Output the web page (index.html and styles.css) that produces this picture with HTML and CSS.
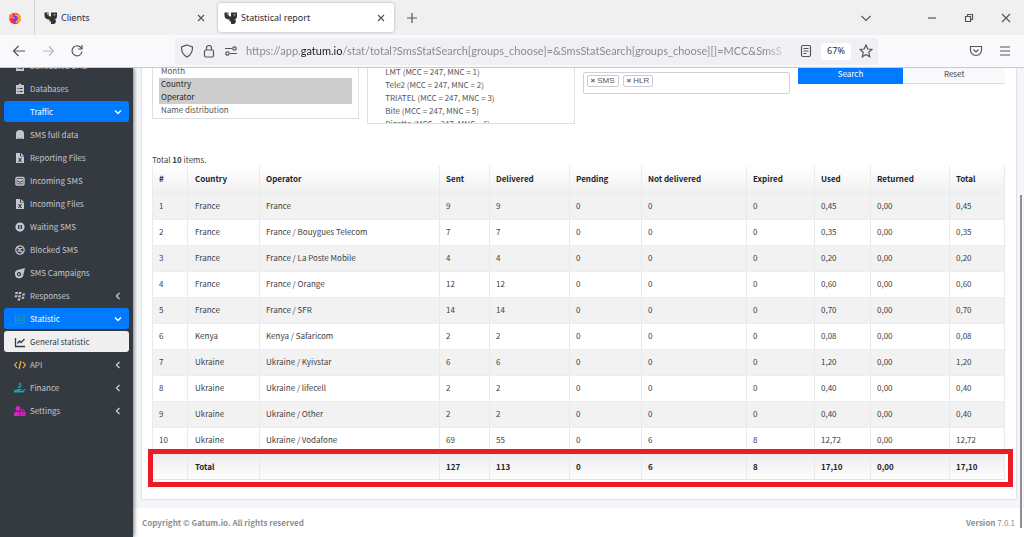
FILE: index.html
```html
<!DOCTYPE html>
<html lang="en">
<head>
<meta charset="utf-8">
<title>Statistical report</title>
<link rel="stylesheet" href="styles.css">
</head>
<body>
<svg class="defs" aria-hidden="true">
  <symbol id="gatum" viewBox="0 0 14 14"><path fill="#333" d="M.5 1.500H4.500V4Q4.500 5.500 7 5.500V1.500H13V5Q13 8.500 9.500 8.500H4.500Q.5 8 .5 4.500z"/><path fill="#333" d="M5.500 8h5l1.500 1.500Q12 12.500 10 13H7V10.500H5.500z"/><path fill="#999" d="M3 1.500h1.500V4H3zM9.500 3H11.500v1.500h-2z"/></symbol>
  <symbol id="x" viewBox="0 0 10 10"><path d="M2 2l6 6M8 2l-6 6"/></symbol>
  <symbol id="left" viewBox="0 0 10 10"><path d="M6.500 2L3.500 5l3 3"/></symbol>
  <symbol id="down" viewBox="0 0 10 10"><path d="M2 3.500l3 3 3-3"/></symbol>
  <symbol id="board" viewBox="0 0 12 12"><path fill="currentColor" fill-rule="evenodd" d="M2 2h2.500a1.500 1.500 0 0 1 3 0H10v9H2zM3.500 5v1h1V5zm2 0v1h3V5zm-2 3v1h1V8zm2 0v1h3V8z"/></symbol>
  <symbol id="sim" viewBox="0 0 12 12"><path fill="currentColor" d="M2 4.500a4 3.500 0 0 1 8 0V10H8.500l-1-.8-1.500.8-1.500-.8-1 .8H2z"/></symbol>
  <symbol id="file" viewBox="0 0 12 12"><path fill="currentColor" fill-rule="evenodd" d="M2 1h4v3.500h4V11H2zM7 1l3 3H7zM4 6l1.300 2L4 10h1.200L6 8.800 6.800 10H8L6.700 8 8 6H6.800L6 7.200 5.200 6z"/></symbol>
  <symbol id="mail" viewBox="0 0 12 12"><rect x="2" y="2.500" width="8" height="7.500" rx="1" fill="none" stroke="currentColor" stroke-width="1.400"/><path fill="currentColor" d="M3 4h6v1.200L6 6.800 3 5.200zM3 6.200l3 1.500 3-1.500V8.500H3z"/></symbol>
  <symbol id="pause" viewBox="0 0 12 12"><path fill="currentColor" fill-rule="evenodd" d="M6 1.500a4.600 4.600 0 1 0 0 9.200A4.600 4.600 0 0 0 6 1.500zM4 4h1.400v4H4zm2.600 0H8v4H6.600z"/></symbol>
  <symbol id="ban" viewBox="0 0 12 12"><g fill="none" stroke="currentColor" stroke-width="1.200"><circle cx="6" cy="6" r="4.200"/><path d="M3 3l6 6M5.500 4.500h3M3.500 7.200h3"/></g></symbol>
  <symbol id="comet" viewBox="0 0 12 12"><path fill="currentColor" fill-rule="evenodd" d="M11 1L9.500 7A4.300 4.300 0 1 1 3.500 3zM5 5a2.200 2.200 0 1 0 .1 0z"/><circle cx="5" cy="7.300" r="1" fill="currentColor"/></symbol>
  <symbol id="berry" viewBox="0 0 12 12"><path fill="currentColor" d="M1.500 2h2.500l-.5 2H1zM5 2h2.500L7 4H4.500zM1 5.200h2.500l-.5 2H.5zM4.500 5.200H7l-.5 2H4zM8.500 3.500H11l-.5 2H8zM8 6.700h2.500l-.5 2H7.500zM4 8.400h2.500l-.5 2H3.500z"/></symbol>
  <symbol id="bars" viewBox="0 0 12 12"><path fill="none" stroke="currentColor" stroke-width="1.200" d="M1.500 1.500v9H11M4 5v4M6 3v6M8 6v3M10 2v7"/></symbol>
  <symbol id="line" viewBox="0 0 12 12"><path fill="none" stroke="currentColor" stroke-width="1.300" d="M1.500 2v8.500H11M3.500 7.500L5.500 5 7 6.500l3.500-3.500"/></symbol>
  <symbol id="code" viewBox="0 0 12 12"><path fill="none" stroke="currentColor" stroke-width="1.200" d="M3 3L.7 6 3 9M9 3l2.300 3L9 9M7 2L5 10"/></symbol>
  <symbol id="hand" viewBox="0 0 12 12"><path fill="currentColor" d="M0 8h2l1.500-1h4v1H6v.7h2L10.500 7l1 .7L9 10.500H0z"/><path fill="none" stroke="currentColor" d="M7.500 2.200Q6.500 1 5.500 1.700T6.400 3.500 5.400 5.200 4.500 4.700M6 .5v5.500"/></symbol>
  <symbol id="user" viewBox="0 0 12 12"><circle cx="4" cy="3.500" r="2.500" fill="currentColor"/><path fill="currentColor" d="M0 11V9q0-2.300 2.300-2.300h3.200V11z"/><path fill="currentColor" fill-rule="evenodd" d="M6.200 7H7V6a1.800 1.800 0 0 1 3.600 0v1h.9v4H6.200zM8 7h1.700V6A.8.800 0 0 0 8 6zm.3 1.500v1h1v-1z"/></symbol>
</svg>

<header class="browser">
  <div class="tabs">
    <div class="pinned"><svg class="fox" viewBox="0 0 14 14"><circle cx="7" cy="7.500" r="5.800" fill="#f4364c"/><path d="M7 1l1.500 2.500L12 4q2 4-.5 7L8 12z" fill="#ffa436"/><path d="M1 3l1 1 2-2 1 3-3 3z" fill="#ff7a2a"/><circle cx="7" cy="7.500" r="2.800" fill="#7b3fe0"/><path d="M3 6q3-1 4 1l-2 1z" fill="#ff8a3a"/></svg></div>
    <div class="tab"><svg class="fav"><use href="#gatum"/></svg><span class="name">Clients</span><button class="plain" aria-label="Close Clients"><svg class="ico10"><use href="#x"/></svg></button></div>
    <div class="tab active"><svg class="fav"><use href="#gatum"/></svg><span class="name">Statistical report</span><button class="plain" aria-label="Close Statistical report"><svg class="ico10"><use href="#x"/></svg></button></div>
    <button class="plain new" aria-label="New tab"><svg class="ico12" viewBox="0 0 12 12"><path d="M6 1v10M1 6h10"/></svg></button>
    <div class="window">
      <button class="plain list" aria-label="List tabs"><svg class="ico12" viewBox="0 0 12 12"><path d="M1.500 4L6 8.500 10.500 4"/></svg></button>
      <button class="plain" aria-label="Minimize"><svg class="ico10" viewBox="0 0 10 10"><path d="M1 5h8"/></svg></button>
      <button class="plain" aria-label="Restore"><svg class="ico10" viewBox="0 0 10 10"><path d="M1.500 3.500h5v5h-5zM3.500 3.500v-2h5v5h-2"/></svg></button>
      <button class="plain" aria-label="Close"><svg class="ico10" viewBox="0 0 10 10"><path d="M1 1l8 8M9 1L1 9"/></svg></button>
    </div>
  </div>
  <div class="toolbar">
    <div class="nav">
      <button class="plain" aria-label="Back"><svg class="ico14" viewBox="0 0 14 14"><path d="M13 7H2M6.500 2L1.500 7l5 5"/></svg></button>
      <button class="plain dim" aria-label="Forward"><svg class="ico14" viewBox="0 0 14 14"><path d="M2 7h10M8 2.500L12.500 7 8 11.500"/></svg></button>
      <button class="plain" aria-label="Reload"><svg class="ico14" viewBox="0 0 14 14"><path d="M11.500 4.500A5 5 0 1 0 12 7.500M12 1v4H8"/></svg></button>
    </div>
    <div class="address">
      <svg class="ico14" viewBox="0 0 14 14"><path d="M7 1l5.500 2q.3 7-5.500 10Q1.200 10 1.500 3z"/></svg>
      <svg class="ico14" viewBox="0 0 14 14"><rect x="2.500" y="6" width="9" height="7" rx="1.500"/><path d="M4.500 6V4a2.500 2.500 0 0 1 5 0v2"/></svg>
      <svg class="ico14" viewBox="0 0 14 14"><path d="M1 4.500h7M6 9.500h7"/><circle cx="10.500" cy="4.500" r="1.700"/><circle cx="3.500" cy="9.500" r="1.700"/></svg>
      <div class="url">https://app.<b>gatum.io</b>/stat/total?SmsStatSearch[groups_choose]=&amp;SmsStatSearch[groups_choose][]=MCC&amp;SmsS</div>
      <svg class="ico14" viewBox="0 0 14 14"><rect x="2.500" y="1.500" width="9" height="11" rx="1.500"/><path d="M4.500 4.500h5M4.500 7h5M4.500 9.500h3"/></svg>
      <button class="zoom">67%</button>
      <svg class="ico14" viewBox="0 0 14 14"><path d="M7 1l1.800 4 4.200.4-3.200 2.900.9 4.400L7 10.500l-3.700 2.200.9-4.400L1 5.400 5.200 5z"/></svg>
    </div>
    <div class="tools">
      <button class="plain" aria-label="Pocket"><svg class="ico14" viewBox="0 0 14 14"><path d="M1.500 2.500h11V6a5.500 5.500 0 0 1-11 0zM4.500 5.500L7 8l2.500-2.500"/></svg></button>
      <button class="plain" aria-label="Menu"><svg class="ico12" viewBox="0 0 12 12"><path d="M1 2h10M1 6h10M1 10h10"/></svg></button>
    </div>
  </div>
</header>

<div class="app">
  <nav class="sidebar">
    <a href="#"><svg><use href="#board"/></svg><span>Scheduled SMS</span></a>
    <a href="#"><svg><use href="#board"/></svg><span>Databases</span></a>
    <a href="#" class="open"><svg></svg><span>Traffic</span><svg class="chev"><use href="#down"/></svg></a>
    <a href="#"><svg><use href="#sim"/></svg><span>SMS full data</span></a>
    <a href="#"><svg><use href="#file"/></svg><span>Reporting Files</span></a>
    <a href="#"><svg><use href="#mail"/></svg><span>Incoming SMS</span></a>
    <a href="#"><svg><use href="#file"/></svg><span>Incoming Files</span></a>
    <a href="#"><svg><use href="#pause"/></svg><span>Waiting SMS</span></a>
    <a href="#"><svg><use href="#ban"/></svg><span>Blocked SMS</span></a>
    <a href="#"><svg><use href="#comet"/></svg><span>SMS Campaigns</span></a>
    <a href="#"><svg><use href="#berry"/></svg><span>Responses</span><svg class="chev"><use href="#left"/></svg></a>
    <a href="#" class="open"><svg class="green"><use href="#bars"/></svg><span>Statistic</span><svg class="chev"><use href="#down"/></svg></a>
    <a href="#" class="current"><svg><use href="#line"/></svg><span>General statistic</span></a>
    <a href="#"><svg class="yellow"><use href="#code"/></svg><span>API</span><svg class="chev"><use href="#left"/></svg></a>
    <a href="#"><svg class="teal"><use href="#hand"/></svg><span>Finance</span><svg class="chev"><use href="#left"/></svg></a>
    <a href="#"><svg class="pink"><use href="#user"/></svg><span>Settings</span><svg class="chev"><use href="#left"/></svg></a>
  </nav>

  <div class="content">
    <main class="card">
      <form class="filters">
        <select multiple class="groups" aria-label="Group by">
          <option>Day</option><option>Month</option><option selected>Country</option><option selected>Operator</option><option>Name distribution</option>
        </select>
        <select multiple class="operators" aria-label="Operators">
          <optgroup label="Latvia"><option>LMT (MCC = 247, MNC = 1)</option><option>Tele2 (MCC = 247, MNC = 2)</option><option>TRIATEL (MCC = 247, MNC = 3)</option><option>Bite (MCC = 247, MNC = 5)</option><option>Rigatta (MCC = 247, MNC = 6)</option></optgroup>
        </select>
        <div class="tags"><button type="button"><i>×</i>SMS</button><button type="button"><i>×</i>HLR</button></div>
        <div class="actions"><button type="submit" class="search">Search</button><button type="reset" class="reset">Reset</button></div>
      </form>
      <p class="summary">Total <b>10</b> items.</p>
      <div class="report">
        <table>
          <colgroup><col class="c1"><col class="c2"><col class="c3"><col class="c4"><col class="c5"><col class="c6"><col class="c7"><col class="c8"><col class="c9"><col class="c10"><col class="c11"></colgroup>
          <thead><tr><th>#</th><th>Country</th><th>Operator</th><th>Sent</th><th>Delivered</th><th>Pending</th><th>Not delivered</th><th>Expired</th><th>Used</th><th>Returned</th><th>Total</th></tr></thead>
          <tbody>
            <tr><td>1</td><td>France</td><td>France</td><td>9</td><td>9</td><td>0</td><td>0</td><td>0</td><td>0,45</td><td>0,00</td><td>0,45</td></tr>
            <tr><td>2</td><td>France</td><td>France / Bouygues Telecom</td><td>7</td><td>7</td><td>0</td><td>0</td><td>0</td><td>0,35</td><td>0,00</td><td>0,35</td></tr>
            <tr><td>3</td><td>France</td><td>France / La Poste Mobile</td><td>4</td><td>4</td><td>0</td><td>0</td><td>0</td><td>0,20</td><td>0,00</td><td>0,20</td></tr>
            <tr><td>4</td><td>France</td><td>France / Orange</td><td>12</td><td>12</td><td>0</td><td>0</td><td>0</td><td>0,60</td><td>0,00</td><td>0,60</td></tr>
            <tr><td>5</td><td>France</td><td>France / SFR</td><td>14</td><td>14</td><td>0</td><td>0</td><td>0</td><td>0,70</td><td>0,00</td><td>0,70</td></tr>
            <tr><td>6</td><td>Kenya</td><td>Kenya / Safaricom</td><td>2</td><td>2</td><td>0</td><td>0</td><td>0</td><td>0,08</td><td>0,00</td><td>0,08</td></tr>
            <tr><td>7</td><td>Ukraine</td><td>Ukraine / Kyivstar</td><td>6</td><td>6</td><td>0</td><td>0</td><td>0</td><td>1,20</td><td>0,00</td><td>1,20</td></tr>
            <tr><td>8</td><td>Ukraine</td><td>Ukraine / lifecell</td><td>2</td><td>2</td><td>0</td><td>0</td><td>0</td><td>0,40</td><td>0,00</td><td>0,40</td></tr>
            <tr><td>9</td><td>Ukraine</td><td>Ukraine / Other</td><td>2</td><td>2</td><td>0</td><td>0</td><td>0</td><td>0,40</td><td>0,00</td><td>0,40</td></tr>
            <tr><td>10</td><td>Ukraine</td><td>Ukraine / Vodafone</td><td>69</td><td>55</td><td>0</td><td>6</td><td>8</td><td>12,72</td><td>0,00</td><td>12,72</td></tr>
          </tbody>
          <tfoot><tr><td></td><td>Total</td><td></td><td>127</td><td>113</td><td>0</td><td>6</td><td>8</td><td>17,10</td><td>0,00</td><td>17,10</td></tr></tfoot>
        </table>
        <div class="highlight"></div>
      </div>
    </main>
    <footer class="foot"><b>Copyright © Gatum.io. All rights reserved</b><span><b>Version</b> 7.0.1</span></footer>
    <div class="thumb"></div>
  </div>
</div>
</body>
</html>
```

FILE: styles.css
```css
* { box-sizing: border-box; }
body {
  margin: 0;
  height: 100vh;
  display: flex;
  flex-direction: column;
  overflow: hidden;
  font: 8px/12px "Noto Sans CJK SC", "Noto Sans", sans-serif;
  color: #3d4145;
  background: #fff;
}
button, select { font: inherit; color: inherit; }
svg { display: block; flex: none; }
.defs { position: absolute; width: 0; height: 0; }

/* Browser frame */
.browser { flex: none; font-family: "Noto Sans", sans-serif; font-size: 9px; color: #2c2c30; }
.browser svg { fill: none; stroke: #55555c; stroke-width: 1.2; }
.browser .fox, .browser .fav { stroke: none; }
.plain { border: 0; padding: 0; background: none; display: flex; }
.ico10 { width: 10px; height: 10px; }
.ico12 { width: 12px; height: 12px; }
.ico14 { width: 14px; height: 14px; }
.tabs { height: 35px; display: flex; align-items: center; background: #f0f0f0; }
.pinned { width: 35px; height: 35px; display: flex; align-items: center; padding-left: 8px; border-right: 1px solid #d4d4d8; }
.fox { width: 14px; height: 14px; }
.fav { width: 14px; height: 14px; }
.tab { width: 176px; height: 29px; margin-left: 3px; display: flex; align-items: center; gap: 3px; padding: 0 8px 0 6px; border-radius: 3px; }
.tab .name { flex: 1; white-space: nowrap; }
.tab.active { margin-left: 4px; background: #fff; box-shadow: 0 0 3px #aaa; }
.new { margin-left: 12px; }
.window { margin-left: auto; display: flex; align-items: center; gap: 27px; padding-right: 13px; }
.window .list { padding-right: 28px; }
.toolbar { height: 33px; display: flex; align-items: center; background: #f9f9fb; border-bottom: 1px solid #c9cacf; }
.nav { width: 175px; flex: none; display: flex; gap: 15px; padding-left: 12px; }
.dim { opacity: .4; }
.address { flex: 1; min-width: 0; height: 27px; display: flex; align-items: center; gap: 8px; padding: 0 5px; background: #f0f0f4; border-radius: 3px; }
.url { flex: 1; min-width: 0; overflow: hidden; white-space: nowrap; font: 11px/16px Lato, "Noto Sans", sans-serif; color: #8a8a92; -webkit-mask-image: linear-gradient(to right, #000 95%, transparent); mask-image: linear-gradient(to right, #000 95%, transparent); }
.url b { font-weight: 400; color: #222; }
.zoom { border: 0; width: 30px; height: 17px; padding: 0; border-radius: 3px; background: #fff; }
.tools { width: 146px; flex: none; display: flex; align-items: center; justify-content: flex-end; gap: 16px; padding-right: 13px; }

/* Application */
.app { flex: 1; min-height: 0; display: flex; overflow: hidden; }
.sidebar { width: 133px; flex: none; overflow: hidden; background: #343a40; padding: 0 4px; display: flex; flex-direction: column; gap: 2px; box-shadow: 1px 0 4px #777; z-index: 1; }
.sidebar a { height: 21px; flex: none; display: flex; align-items: center; gap: 4px; padding: 0 6px 0 10px; border-radius: 3px; color: #c2c7d0; text-decoration: none; }
.sidebar a:first-child { margin-top: -13px; }
.sidebar svg { width: 12px; height: 12px; }
.sidebar span { flex: 1; }
.sidebar .chev { width: 10px; height: 10px; fill: none; stroke: currentColor; stroke-width: 1.4; }
.sidebar .open { background: #007bff; color: #fff; }
.sidebar .current { background: #efefef; color: #343a40; }
.sidebar .green { color: #20a080; }
.sidebar .yellow { color: #f5b942; }
.sidebar .teal { color: #17a2b8; }
.sidebar .pink { color: #e020c0; }

.content { flex: 1; min-width: 0; position: relative; overflow: hidden; display: flex; flex-direction: column; background: #f4f6f9; }
.card { margin: 0 8px 0 9px; padding: 0 11px 19px 10px; background: #fff; box-shadow: 0 0 2px #b5b9bf; }
.filters { margin-top: -24px; display: grid; grid-template-columns: repeat(4, 1fr); gap: 8px; align-items: start; }
.filters select { width: 100%; border: 1px solid #dcdfe3; border-radius: 0; background: #fff; overflow: hidden; outline: 0; color: #555; }
.filters option, .filters optgroup { font: inherit; line-height: 13px; min-height: 13px; padding: 0 2px; }
.groups { height: 75px; padding: 7px 6px 1px; }
.groups option:checked { background: #cdcdcd linear-gradient(#cdcdcd, #cdcdcd); color: #222; }
.operators { height: 78px; margin-top: 2px; padding: 7px 5px; }
.operators option { padding-left: 10px; }
.tags { height: 22px; margin-top: 28px; display: flex; align-items: center; gap: 4px; padding: 0 3px 4px; border: 1px solid #cfd3d8; border-radius: 2px; font-family: "Liberation Sans", sans-serif; }
.tags button { height: 12px; display: flex; align-items: center; gap: 2px; padding: 0 3px; border: 1px solid #ccc; border-radius: 2px; background: #fff; line-height: 10px; color: #555; }
.tags i { font-style: normal; font-weight: 700; }
.actions { height: 22px; margin-top: 18px; display: grid; grid-template-columns: 53fr 51fr; }
.actions button { border: 0; padding: 2px 0 0; }
.actions .search { background: #007bff; color: #fff; }
.actions .reset { background: #f8f9fa; border-bottom: 1px solid #ddd; }
.summary { margin: 30px 0 0; }
.report { position: relative; }
table { width: 100%; table-layout: fixed; border-collapse: separate; border-spacing: 0; }
.c1 { width: 35px; } .c2 { width: 72px; } .c3 { width: 180px; } .c4 { width: 50px; }
.c5 { width: 80px; } .c6 { width: 72px; } .c7 { width: 105px; } .c8 { width: 68px; }
.c9 { width: 56px; } .c10 { width: 79px; } .c11 { width: 56px; }
th, td { height: 26px; padding: 0 6px; text-align: left; border-left: 1px solid #e8eaec; border-top: 1px solid #ebedef; white-space: nowrap; }
th:nth-child(2), td:nth-child(2) { padding-left: 7px; }
th:last-child, td:last-child { border-right: 1px solid #e8eaec; }
thead th { height: 27px; padding-bottom: 2px; border-top: 0; color: #212529; }
thead tr { background: linear-gradient(#fff, #f0f0f0); }
tbody td { padding-bottom: 2px; }
tbody tr:nth-child(odd) { background: #f2f2f2; }
tfoot td { height: 27px; font-weight: 700; color: #212529; border-bottom: 1px solid #e2e4e6; }
tfoot tr { background: linear-gradient(#ececee, #fff); }
.highlight { position: absolute; left: -4px; right: -8px; bottom: -7px; height: 38px; border: 5px solid #ed1c24; }
.foot { margin-top: 9px; flex: 1; display: flex; justify-content: space-between; align-items: center; padding: 0 9px; background: #fff; color: #869099; }
.thumb { position: absolute; right: 2px; top: 127px; bottom: 9px; width: 2px; background: #8f8f94; }
```
